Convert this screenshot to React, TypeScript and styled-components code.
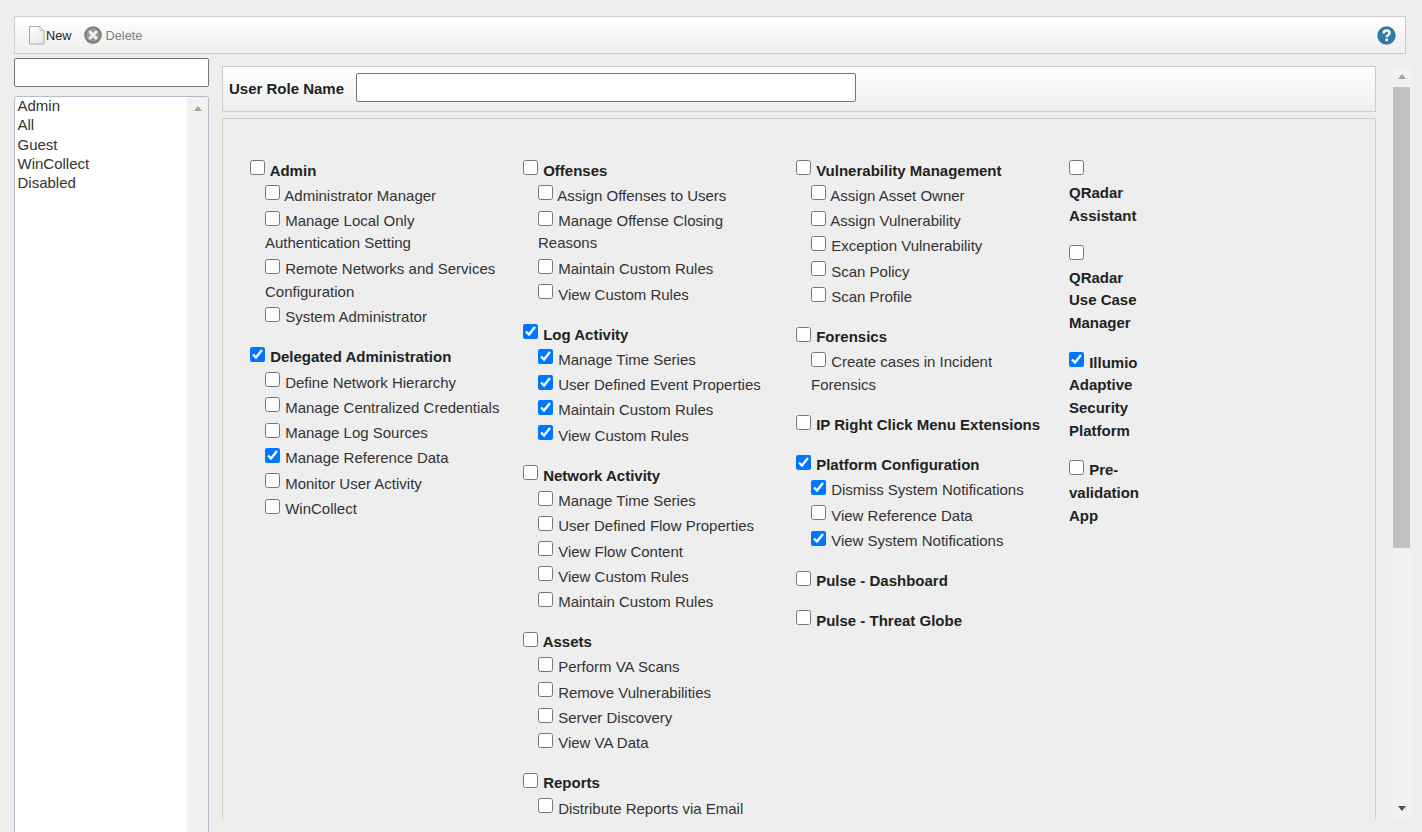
import React from "react";
import styled, { createGlobalStyle } from "styled-components";

const Global = createGlobalStyle`
  html, body { margin: 0; padding: 0; height: 100%; overflow: hidden; background: #eeeeee; }
  body { font-family: "Liberation Sans", Arial, sans-serif; font-size: 15px; color: #222; }
`;

const Page = styled.div`
  height: 832px;
  padding: 16px 16px 0 14px;
  box-sizing: border-box;
  display: flex;
  flex-direction: column;
  overflow: hidden;
`;
const Toolbar = styled.div`
  flex: none;
  height: 38px;
  box-sizing: border-box;
  border: 1px solid #cccccc;
  background: linear-gradient(#ffffff, #eeeeee);
  display: flex;
  align-items: center;
  padding: 0 9px 0 14px;
`;
const ToolButton = styled.span<{ $disabled?: boolean }>`
  display: inline-flex;
  align-items: center;
  font-size: 12.75px;
  color: ${(p) => (p.$disabled ? "#808080" : "#222222")};
  margin-right: 12px;
  gap: ${(p) => (p.$disabled ? "4px" : "0px")};
`;
const HelpButton = styled.span`
  margin-left: auto;
  display: inline-flex;
`;
const Main = styled.div`
  flex: 1;
  display: flex;
  min-height: 0;
`;
const Sidebar = styled.div`
  flex: none;
  width: 195px;
  margin-right: 13px;
  padding-top: 4px;
  display: flex;
  flex-direction: column;
`;
const Search = styled.input`
  flex: none;
  height: 29px;
  box-sizing: border-box;
  border: 1px solid #767676;
  border-radius: 2px;
  background: #fff;
  margin: 0 0 9px;
  padding: 0;
  outline: none;
`;
const RoleList = styled.div`
  flex: none;
  height: 760px;
  box-sizing: border-box;
  border: 1px solid #b4bccc;
  border-radius: 3px 3px 0 0;
  background: #fff;
  display: flex;
`;
const RoleItems = styled.div`
  flex: 1;
  padding: 0 2.5px;
  margin-top: -0.8px;
  font-size: 15px;
  line-height: 19.25px;
  color: #333;
`;
const ListTrack = styled.div`
  flex: none;
  width: 21px;
  background: #f1f1f1;
  display: flex;
  justify-content: center;
  padding-top: 9px;
  box-sizing: border-box;
`;
const ArrowUp = styled.span`
  width: 0;
  height: 0;
  border-left: 4.5px solid transparent;
  border-right: 4.5px solid transparent;
  border-bottom: 5px solid #a3a3a3;
`;
const ArrowDown = styled.span`
  width: 0;
  height: 0;
  border-left: 4.5px solid transparent;
  border-right: 4.5px solid transparent;
  border-top: 5px solid #505050;
`;
const Content = styled.div`
  flex: none;
  width: 1154px;
  padding-top: 12px;
  display: flex;
  flex-direction: column;
  height: 765px;
  box-sizing: border-box;
`;
const NameBar = styled.div`
  flex: none;
  height: 46px;
  box-sizing: border-box;
  border: 1px solid #cccccc;
  background: linear-gradient(#ffffff, #eeeeee);
  display: flex;
  align-items: center;
  padding: 0 0 0 6px;
  margin-bottom: 6px;
`;
const NameLabel = styled.label`
  font-weight: bold;
  font-size: 15px;
  color: #222;
  width: 127px;
  margin-bottom: 2px;
`;
const NameInput = styled.input`
  width: 500px;
  height: 29px;
  box-sizing: border-box;
  border: 1px solid #767676;
  border-radius: 2px;
  background: #fff;
  margin: 6px 0 0;
  padding: 0;
  outline: none;
  align-self: flex-start;
`;
const Panel = styled.div`
  flex: 1;
  min-height: 0;
  overflow: hidden;
  box-sizing: border-box;
  border: 1px solid #cccccc;
  border-bottom: none;
  padding: 37.6px 0 0 27px;
  display: grid;
  grid-template-columns: 273px 273px 273px 72px;
  align-content: start;
`;
const Column = styled.div<{ $narrow?: boolean }>`
  padding-right: ${(p) => (p.$narrow ? 0 : 23)}px;
`;
const Group = styled.div<{ $tight?: boolean }>`
  margin-bottom: ${(p) => (p.$tight ? 14 : 14.7)}px;
`;
const Line = styled.div<{ $bold?: boolean; $sub?: boolean }>`
  line-height: 22.75px;
  font-weight: ${(p) => (p.$bold ? "bold" : "normal")};
  margin-left: ${(p) => (p.$sub ? 15 : 0)}px;
  color: ${(p) => (p.$bold ? "#222222" : "#333333")};
`;
const Check = styled.input`
  width: 15px;
  height: 15px;
  margin: 3.55px 1px 3.3px 0;
`;
const Scrollbar = styled.div`
  flex: none;
  width: 21px;
  margin: 12px 0 0 15px;
  height: 753px;
  background: #f1f1f1;
  box-sizing: border-box;
  display: flex;
  flex-direction: column;
  align-items: center;
`;
const ScrollUp = styled.div`
  flex: none;
  height: 21px;
  display: flex;
  align-items: center;
  justify-content: center;
`;
const ScrollThumb = styled.div`
  flex: none;
  width: 17px;
  height: 461px;
  background: #c1c1c1;
`;
const ScrollDown = styled.div`
  margin-top: auto;
  height: 21px;
  display: flex;
  align-items: center;
  justify-content: center;
`;

type Item = string | [string, boolean];
type G = { name: string; checked?: boolean; items?: Item[] };

const columns: G[][] = [
  [
    { name: "Admin", items: ["Administrator Manager", "Manage Local Only Authentication Setting", "Remote Networks and Services Configuration", "System Administrator"] },
    { name: "Delegated Administration", checked: true, items: ["Define Network Hierarchy", "Manage Centralized Credentials", "Manage Log Sources", ["Manage Reference Data", true], "Monitor User Activity", "WinCollect"] },
  ],
  [
    { name: "Offenses", items: ["Assign Offenses to Users", "Manage Offense Closing Reasons", "Maintain Custom Rules", "View Custom Rules"] },
    { name: "Log Activity", checked: true, items: [["Manage Time Series", true], ["User Defined Event Properties", true], ["Maintain Custom Rules", true], ["View Custom Rules", true]] },
    { name: "Network Activity", items: ["Manage Time Series", "User Defined Flow Properties", "View Flow Content", "View Custom Rules", "Maintain Custom Rules"] },
    { name: "Assets", items: ["Perform VA Scans", "Remove Vulnerabilities", "Server Discovery", "View VA Data"] },
    { name: "Reports", items: ["Distribute Reports via Email"] },
  ],
  [
    { name: "Vulnerability Management", items: ["Assign Asset Owner", "Assign Vulnerability", "Exception Vulnerability", "Scan Policy", "Scan Profile"] },
    { name: "Forensics", items: ["Create cases in Incident Forensics"] },
    { name: "IP Right Click Menu Extensions" },
    { name: "Platform Configuration", checked: true, items: [["Dismiss System Notifications", true], "View Reference Data", ["View System Notifications", true]] },
    { name: "Pulse - Dashboard" },
    { name: "Pulse - Threat Globe" },
  ],
  [
    { name: "QRadar Assistant" },
    { name: "QRadar Use Case Manager" },
    { name: "Illumio Adaptive Security Platform", checked: true },
    { name: "Pre-validation App" },
  ],
];

const roles = ["Admin", "All", "Guest", "WinCollect", "Disabled"];

const NewIcon = () => (
  <svg width="17" height="20" viewBox="0 0 17 20">
    <defs>
      <linearGradient id="pg" x1="0" y1="0" x2="1" y2="1">
        <stop offset="0" stopColor="#ffffff" />
        <stop offset="1" stopColor="#e6e6e6" />
      </linearGradient>
    </defs>
    <path d="M.5 1.5h10.5l4 4v13.5H.5z" fill="url(#pg)" stroke="#a9a9a9" />
    <path d="M11 1.5v4h4" fill="#eeeeee" stroke="#bdbdbd" />
  </svg>
);
const DeleteIcon = () => (
  <svg width="18" height="18" viewBox="0 0 18 18">
    <circle cx="9" cy="9" r="8.8" fill="#7b7b7b" />
    <circle cx="9" cy="9" r="6.8" fill="#999999" />
    <path d="M6 6l6 6M12 6l-6 6" stroke="#f2f2f2" strokeWidth="3" strokeLinecap="round" />
  </svg>
);
const HelpIcon = () => (
  <svg width="19" height="19" viewBox="0 0 19 19">
    <circle cx="9.5" cy="9.5" r="9.2" fill="#2f7ba6" />
    <path d="M6.6 7.4c0-1.9 1.3-2.9 3-2.9s2.9 1 2.9 2.5c0 2.2-2.8 2.2-2.8 4.3" fill="none" stroke="#eef6fa" strokeWidth="2.5" />
    <rect x="8.4" y="12.6" width="2.6" height="2.6" fill="#eef6fa" />
  </svg>
);

export default function App() {
  return (
    <Page>
      <Global />
      <Toolbar>
        <ToolButton><NewIcon />New</ToolButton>
        <ToolButton $disabled><DeleteIcon />Delete</ToolButton>
        <HelpButton><HelpIcon /></HelpButton>
      </Toolbar>
      <Main>
        <Sidebar>
          <Search />
          <RoleList>
            <RoleItems>{roles.map((r) => <div key={r}>{r}</div>)}</RoleItems>
            <ListTrack><ArrowUp /></ListTrack>
          </RoleList>
        </Sidebar>
        <Content>
          <NameBar>
            <NameLabel>User Role Name</NameLabel>
            <NameInput />
          </NameBar>
          <Panel>
            {columns.map((col, ci) => (
              <Column key={ci} $narrow={ci === 3}>
                {col.map((g) => (
                  <Group key={g.name} $tight={ci === 3}>
                    <Line $bold>
                      <Check type="checkbox" defaultChecked={!!g.checked} /> {g.name}
                    </Line>
                    {g.items?.map((it) => {
                      const [label, on] = typeof it === "string" ? [it, false] : it;
                      return (
                        <Line $sub key={label}>
                          <Check type="checkbox" defaultChecked={on} /> {label}
                        </Line>
                      );
                    })}
                  </Group>
                ))}
              </Column>
            ))}
          </Panel>
        </Content>
        <Scrollbar>
          <ScrollUp><ArrowUp /></ScrollUp>
          <ScrollThumb />
          <ScrollDown><ArrowDown /></ScrollDown>
        </Scrollbar>
      </Main>
    </Page>
  );
}
